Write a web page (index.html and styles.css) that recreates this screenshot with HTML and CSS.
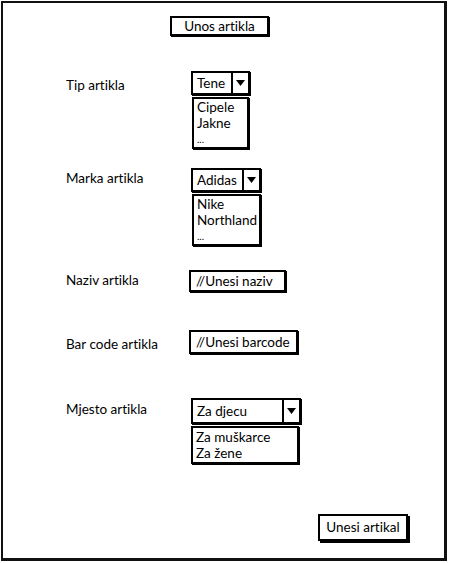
FILE: index.html
```html
<!DOCTYPE html>
<html lang="hr">
<head>
<meta charset="utf-8">
<title>Unos artikla</title>
<link rel="stylesheet" href="styles.css">
</head>
<body>
<div class="frame">
  <div class="title-row"><div class="title">Unos artikla</div></div>

  <div class="row row-tip">
    <div class="label">Tip artikla</div>
    <div class="control">
      <div class="combo combo-tip">
        <span class="combo-value">Tene</span>
        <span class="combo-arrow"><svg width="9" height="6" viewBox="0 0 9 6"><path d="M0 0H9L4.5 6Z" fill="#000"/></svg></span>
      </div>
      <div class="list list-tip">
        <div>Cipele</div>
        <div>Jakne</div>
        <div class="dots">...</div>
      </div>
    </div>
  </div>

  <div class="row row-marka">
    <div class="label">Marka artikla</div>
    <div class="control">
      <div class="combo combo-marka">
        <span class="combo-value">Adidas</span>
        <span class="combo-arrow"><svg width="9" height="6" viewBox="0 0 9 6"><path d="M0 0H9L4.5 6Z" fill="#000"/></svg></span>
      </div>
      <div class="list list-marka">
        <div>Nike</div>
        <div>Northland</div>
        <div class="dots">...</div>
      </div>
    </div>
  </div>

  <div class="row row-naziv">
    <div class="label">Naziv artikla</div>
    <div class="control">
      <div class="input input-naziv">//Unesi naziv</div>
    </div>
  </div>

  <div class="row row-barcode">
    <div class="label">Bar code artikla</div>
    <div class="control">
      <div class="input input-barcode">//Unesi barcode</div>
    </div>
  </div>

  <div class="row row-mjesto">
    <div class="label">Mjesto artikla</div>
    <div class="control">
      <div class="combo combo-mjesto">
        <span class="combo-value">Za djecu</span>
        <span class="combo-arrow"><svg width="9" height="6" viewBox="0 0 9 6"><path d="M0 0H9L4.5 6Z" fill="#000"/></svg></span>
      </div>
      <div class="list list-mjesto">
        <div>Za muškarce</div>
        <div>Za žene</div>
      </div>
    </div>
  </div>

  <div class="button-row"><div class="button">Unesi artikal</div></div>
</div>
</body>
</html>
```

FILE: styles.css
```css
* { box-sizing: border-box; }

html, body {
  margin: 0;
  padding: 0;
  background: #fff;
}

body {
  font-family: Lato, "Noto Sans", sans-serif;
  font-size: 13.5px;
  line-height: 16px;
  color: #000;
  font-variant-ligatures: none;
}

.frame {
  margin: 1px 0 0 1px;
  width: 446px;
  height: 560px;
  border: 2px solid #111;
  border-right-width: 3px;
  border-bottom-width: 3px;
  padding-left: 63px;
}

.title-row {
  padding: 13px 0 0 104px;
}

.title {
  width: 99px;
  height: 20px;
  border: 2px solid #000;
  box-shadow: 1px 1px 0 #000;
  text-align: center;
  line-height: 16px;
}

.row {
  display: flex;
  align-items: flex-start;
}

.label {
  width: 125px;
  flex: none;
}

.control {
  display: flex;
  flex-direction: column;
  align-items: flex-start;
}

.row-tip { margin-top: 35px; }
.row-tip .label { padding-top: 6px; }
.row-marka { margin-top: 19px; }
.row-marka .label { padding-top: 2px; }
.row-naziv { margin-top: 24px; }
.row-naziv .label { padding-top: 2px; }
.row-barcode { margin-top: 38px; }
.row-barcode .label { padding-top: 6px; }
.row-mjesto { margin-top: 44px; }
.row-mjesto .label { padding-top: 3px; }

.combo {
  display: flex;
  height: 24px;
  border: 2px solid #000;
  box-shadow: 1px 1px 0 #000;
  background: #fff;
}

.combo-value {
  flex: 1;
  padding: 0 4px;
  line-height: 20px;
  white-space: nowrap;
}

.combo-arrow {
  width: 17px;
  flex: none;
  border-left: 2px solid #000;
  display: flex;
  align-items: center;
  justify-content: center;
}

.combo-tip { width: 59px; }
.combo-marka { width: 70px; }
.combo-mjesto { width: 110px; height: 26px; }
.combo-mjesto .combo-value { line-height: 22px; }

.list {
  margin: 2px 0 0 1px;
  border: 2px solid #000;
  box-shadow: 1px 1px 0 #000;
  padding: 0 3px;
  line-height: 16px;
  white-space: nowrap;
}

.list-tip { width: 57px; }
.list-marka { width: 69px; }
.list-mjesto { width: 108px; margin-left: 0; padding-top: 1px; padding-bottom: 1px; }

.dots {
  font-size: 10px;
}

.input {
  border: 2px solid #000;
  box-shadow: 1px 1px 0 #000;
  padding: 0 5px;
  white-space: nowrap;
  margin-left: -2px;
}

.input-naziv {
  width: 97px;
  height: 22px;
  line-height: 18px;
}

.input-barcode {
  width: 109px;
  height: 24px;
  line-height: 20px;
}

.button-row {
  margin-top: 50px;
  padding-left: 252px;
}

.button {
  width: 90px;
  height: 27px;
  border: 2px solid #000;
  box-shadow: 2px 2px 0 #000;
  text-align: center;
  line-height: 23px;
}
```
